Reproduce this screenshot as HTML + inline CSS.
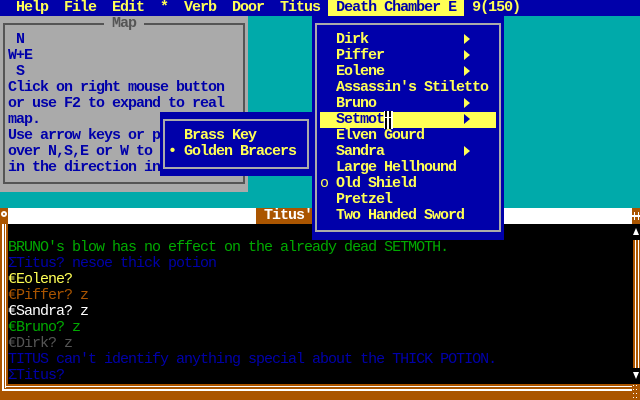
<!DOCTYPE html>
<html><head><meta charset="utf-8"><style>
*{margin:0;padding:0;box-sizing:border-box}
body{width:640px;height:400px;overflow:hidden;background:#00aaaa;position:relative;font-family:"Liberation Mono",monospace;font-size:15px;letter-spacing:-1px;line-height:16px}
.a{position:absolute}
pre{font-family:inherit;font-size:inherit;line-height:16px;white-space:pre}
.b{font-weight:bold}
</style></head><body>
<!-- menu bar -->
<div class="a" style="left:0;top:0;width:640px;height:16px;background:#0000aa"></div>
<div class="a" style="left:328px;top:0;width:136px;height:16px;background:#ffff55"></div>
<pre class="a b" style="left:0;top:0;color:#ffff55">  Help  File  Edit  *  Verb  Door  Titus  <span style="color:#0000aa">Death Chamber E</span>  9(150)</pre>

<!-- map panel -->
<div class="a" style="left:0;top:16px;width:248px;height:176px;background:#aaaaaa"></div>
<div class="a" style="left:3px;top:23px;width:242px;height:161px;border:2px solid #555555"></div>
<div class="a" style="left:104px;top:16px;width:40px;height:16px;background:#aaaaaa"></div>
<pre class="a b" style="left:112px;top:16px;color:#555555">Map</pre>
<pre class="a b" style="left:8px;top:32px;color:#0000aa"> N
W+E
 S
Click on right mouse button
or use F2 to expand to real
map.
Use arrow keys or p
over N,S,E or W to
in the direction in</pre>

<!-- small popup -->
<div class="a" style="left:160px;top:112px;width:152px;height:64px;background:#0000aa"></div>
<div class="a" style="left:163px;top:119px;width:146px;height:50px;border:2px solid #aaaaaa"></div>
<pre class="a b" style="left:168px;top:128px;color:#ffff55">  Brass Key
• Golden Bracers</pre>

<!-- bottom window -->
<div class="a" style="left:0;top:208px;width:640px;height:192px;background:#aa5500"></div>
<div class="a" style="left:8px;top:208px;width:624px;height:16px;background:#fff"></div>
<div class="a" style="left:256px;top:208px;width:56px;height:16px;background:#aa5500"></div>
<pre class="a b" style="left:264px;top:208px;color:#fff">Titus'</pre>
<div class="a" style="left:1px;top:211px;width:6px;height:6px;border:2px solid #fff;border-radius:50%"></div>
<div class="a" style="left:2px;top:224px;width:2px;height:166px;background:#fff"></div>
<div class="a" style="left:5px;top:224px;width:1px;height:164px;background:#fff"></div>
<div class="a" style="left:2px;top:389px;width:630px;height:2px;background:#fff"></div>
<div class="a" style="left:5px;top:386px;width:627px;height:1px;background:#fff"></div>
<div class="a" style="left:8px;top:224px;width:624px;height:160px;background:#000"></div>
<div class="a" style="left:632px;top:224px;width:8px;height:160px;background:#000"></div>
<div class="a" style="left:634px;top:212px;width:5px;height:8px;border-left:1px solid #fff;border-right:1px solid #fff"></div>
<div class="a" style="left:632px;top:215px;width:8px;height:2px;background:#fff"></div>
<svg class="a" style="left:632px;top:224px" width="8" height="160"><polygon points="4,4 1,11 7,11" fill="#fff"/><rect x="1" y="16" width="7" height="128" fill="#aa5500"/><rect x="3" y="16" width="1" height="128" fill="#fff"/><rect x="6" y="16" width="1" height="128" fill="#fff"/><polygon points="1,148 7,148 4,155" fill="#fff"/></svg>
<svg class="a" style="left:632px;top:384px" width="8" height="16"><g fill="#fff"><rect x="1" y="1" width="1" height="1"/><rect x="4" y="1" width="1" height="1"/><rect x="1" y="5" width="1" height="1"/><rect x="4" y="5" width="1" height="1"/><rect x="1" y="9" width="1" height="1"/><rect x="4" y="9" width="1" height="1"/><rect x="1" y="13" width="1" height="1"/><rect x="4" y="13" width="1" height="1"/></g></svg>
<pre class="a" style="left:8px;top:240px"><span style="color:#00aa00">BRUNO's blow has no effect on the already dead SETMOTH.</span>
<span style="color:#0000aa">ΣTitus? nesoe thick potion</span>
<span style="color:#ffff55">€Eolene?</span>
<span style="color:#aa5500">€Piffer? z</span>
<span style="color:#fff">€Sandra? z</span>
<span style="color:#00aa00">€Bruno? z</span>
<span style="color:#555555">€Dirk? z</span>
<span style="color:#0000aa">TITUS can't identify anything special about the THICK POTION.</span>
<span style="color:#0000aa">ΣTitus?</span></pre>

<!-- dropdown -->
<div class="a" style="left:312px;top:16px;width:192px;height:224px;background:#0000aa"></div>
<div class="a" style="left:315px;top:23px;width:186px;height:209px;border:2px solid #aaaaaa"></div>
<div class="a" style="left:320px;top:112px;width:176px;height:16px;background:#ffff55"></div>
<pre class="a b" style="left:320px;top:32px;color:#ffff55">  Dirk
  Piffer
  Eolene
  Assassin's Stiletto
  Bruno
  <span style="color:#0000aa">Setmot</span>
  Elven Gourd
  Sandra
  Large Hellhound
<span style="font-weight:normal">o</span> Old Shield
  Pretzel
  Two Handed Sword</pre>
<svg class="a" style="left:464px;top:32px" width="8" height="144"><g fill="#ffff55"><polygon points="0,2 6,7 0,12"/><polygon points="0,18 6,23 0,28"/><polygon points="0,34 6,39 0,44"/><polygon points="0,66 6,71 0,76"/><polygon points="0,114 6,119 0,124"/></g><polygon points="0,82 6,87 0,92" fill="#0000aa"/></svg>
<svg class="a" style="left:384px;top:111px" width="9" height="18"><rect x="0" y="0" width="9" height="18" fill="#fff"/><rect x="1" y="0" width="2" height="18" fill="#000"/><rect x="5" y="0" width="2" height="18" fill="#000"/><rect x="0" y="6" width="9" height="1" fill="#fff"/></svg>
</body></html>
